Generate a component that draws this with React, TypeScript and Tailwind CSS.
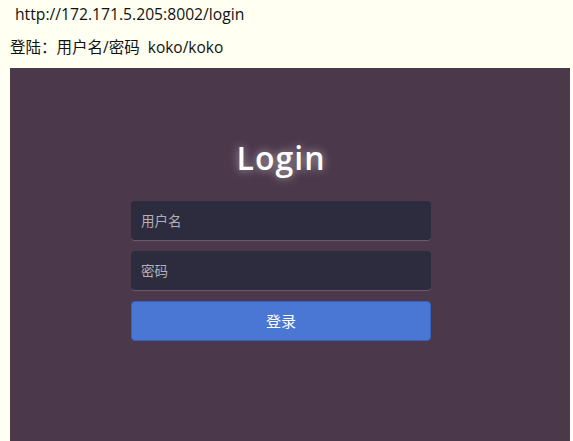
export default function App() {
  return (
    <div
      className="w-[573px] h-[441px] overflow-hidden bg-[#fffff2] text-[#111]"
      style={{ fontFamily: '"Open Sans", "Noto Sans CJK SC", sans-serif' }}
    >
      <div className="pl-[15px] pt-[3px] h-[30px] text-[15.7px] leading-[22px]">
        http://172.171.5.205:8002/login
      </div>
      <div className="pl-[10px] pt-[6px] h-[38px] text-[15.5px] leading-[22px] whitespace-pre">
        登陆：用户名/密码  koko/koko
      </div>
      <div className="ml-[10px] w-[560px] h-[373px] bg-[#4b384b] pl-[121px]">
        <div className="w-[300px] flex flex-col">
          <h1
            className="mt-[70px] text-center text-[32px] leading-[40px] text-white font-semibold tracking-[1px]"
            style={{ textShadow: '0 0 10px rgba(255,255,255,0.6)' }}
          >
            Login
          </h1>
          <div className="mt-[23px] flex flex-col gap-[10px]">
            <input
              className="h-[40px] rounded-[4px] bg-[#2d2b3e] border-b border-[#6b5a6b] px-[10px] text-[13.5px] text-white placeholder:text-[#b3b0b9] outline-none"
              placeholder="用户名"
            />
            <input
              className="h-[40px] rounded-[4px] bg-[#2d2b3e] border-b border-[#6b5a6b] px-[10px] text-[13.5px] text-white placeholder:text-[#b3b0b9] outline-none"
              placeholder="密码"
            />
            <button className="h-[40px] rounded-[4px] bg-[#4a77d4] border border-[#3762bc] text-white text-[15px]">
              登录
            </button>
          </div>
        </div>
      </div>
    </div>
  );
}
